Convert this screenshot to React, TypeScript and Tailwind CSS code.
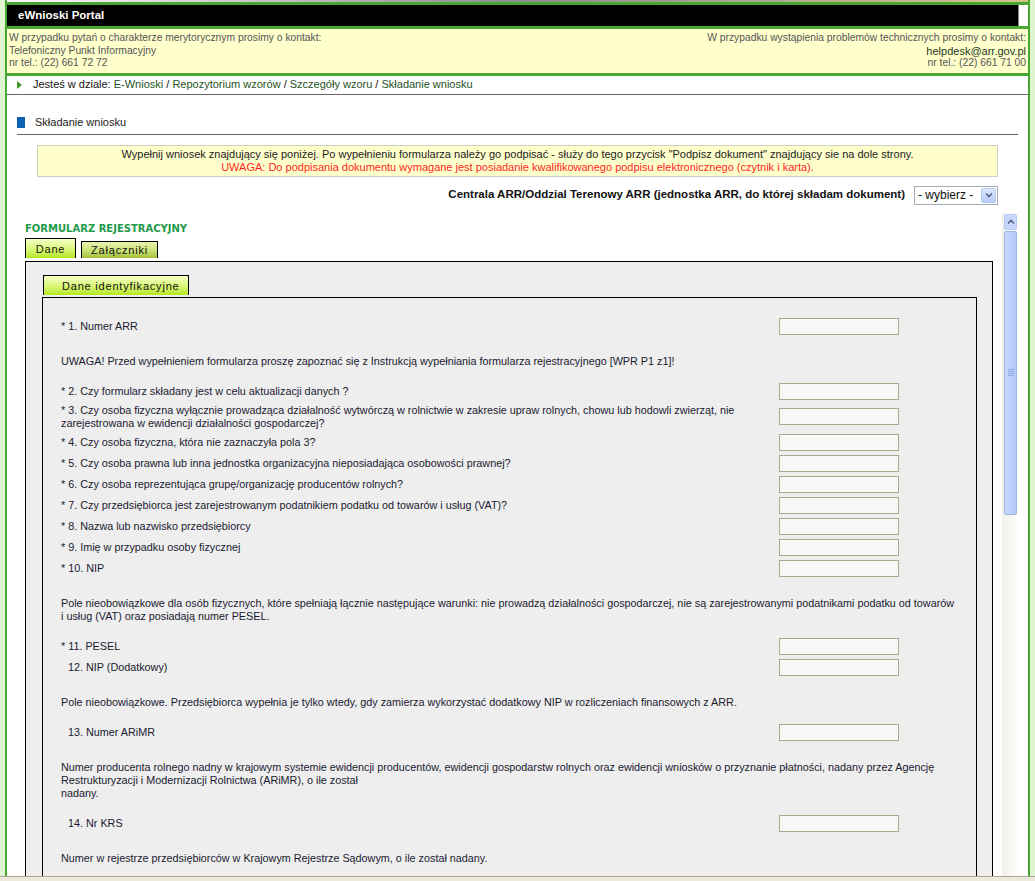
import React from 'react';

const ff = { fontFamily: '"Liberation Sans", Arial, sans-serif' };

interface Row {
  label: React.ReactNode;
  req?: boolean;
}

function Field({ label, req }: Row) {
  return (
    <div className="flex items-center py-[2px]">
      <div className={`w-[718px] leading-[13px] ${req ? '' : 'pl-[7px]'}`}>
        {req ? '* ' : ''}
        {label}
      </div>
      <div className="w-[120px] h-[17px] border border-[#a7ab8d] bg-[#f8f8f8]" />
    </div>
  );
}

function Note({ children }: { children: React.ReactNode }) {
  return <div className="mt-[18px] mb-[13px] leading-[13px]">{children}</div>;
}

function XpScrollbar() {
  return (
    <div className="w-[16px] flex flex-col bg-gradient-to-r from-[#f3f1ec] to-[#fdfdfb] border-l border-[#eeede5]">
      <div className="h-[16px] m-px rounded-[2px] border border-[#b7caf5] bg-[#c6d6fc] flex items-center justify-center">
        <svg width="8" height="6" viewBox="0 0 8 6">
          <path d="M1 4.5 L4 1.5 L7 4.5" fill="none" stroke="#4d6185" strokeWidth="1.6" />
        </svg>
      </div>
      <div className="h-[284px] mx-px rounded-[2px] border border-[#9cb3e6] bg-gradient-to-r from-[#c9d8fc] via-[#bdd0fb] to-[#b4c8f6] flex items-center justify-center">
        <div className="flex flex-col gap-[1px]">
          <div className="w-[6px] h-px bg-[#8ea6e6]" />
          <div className="w-[6px] h-px bg-[#8ea6e6]" />
          <div className="w-[6px] h-px bg-[#8ea6e6]" />
          <div className="w-[6px] h-px bg-[#8ea6e6]" />
        </div>
      </div>
      <div className="flex-1" />
    </div>
  );
}

export default function App() {
  return (
    <div className="w-[1035px] h-[881px] overflow-hidden bg-[#def5cf] flex flex-col" style={ff}>
      <div className="ml-[5px] w-[1025px] flex-1 min-h-0 flex flex-col bg-white border-x-2 border-[#47a634]">
        {/* header */}
        <div className="h-[2px] bg-gradient-to-r from-white via-[#8a8f90] to-[#d8c48a]" />
        <div className="h-[3px] bg-[#4ba532]" />
        <div className="h-[21px] flex">
          <div className="flex-1 bg-black flex items-center pl-[11px] text-white text-[11.5px] font-bold">
            eWnioski Portal
          </div>
          <div className="w-[10px] bg-white border-l border-[#888]" />
        </div>
        <div className="border-y-[3px] border-[#4ba532] bg-[#ffffcc] px-[2px] pt-[3px] pb-[3px] flex justify-between text-[10.3px] leading-[12.5px] text-[#555]">
          <div>
            <div>W przypadku pytań o charakterze merytorycznym prosimy o kontakt:</div>
            <div>Telefoniczny Punkt Informacyjny</div>
            <div>nr tel.: (22) 661 72 72</div>
          </div>
          <div className="text-right">
            <div>W przypadku wystąpienia problemów technicznych prosimy o kontakt:</div>
            <div className="text-[11px] text-[#1e3a1e]">helpdesk@arr.gov.pl</div>
            <div>nr tel.: (22) 661 71 00</div>
          </div>
        </div>

        {/* breadcrumb */}
        <div className="h-[19px] flex items-center pl-[10px] text-[11px] text-[#111] border-b border-[#666]">
          <svg width="5" height="8" viewBox="0 0 5 8" className="mr-[11px]">
            <path d="M0 0 L5 4 L0 8 Z" fill="#3f9a2c" />
          </svg>
          <span>Jesteś w dziale:&nbsp;</span>
          <span className="text-[#245224]">E-Wnioski</span>
          <span>&nbsp;/&nbsp;</span>
          <span className="text-[#245224]">Repozytorium wzorów</span>
          <span>&nbsp;/&nbsp;</span>
          <span className="text-[#245224]">Szczegóły wzoru</span>
          <span>&nbsp;/&nbsp;</span>
          <span className="text-[#245224]">Składanie wniosku</span>
        </div>

        {/* page content */}
        <div className="flex-1 min-h-0 flex flex-col pl-[10px] pr-[10px]">
          <div className="mt-[22px] flex items-center h-[12px] border-b border-[#666] pb-[5px] box-content">
            <div className="w-[8px] h-[11px] bg-[#0b62b4]" />
            <span className="ml-[10px] text-[11px] text-[#222]">Składanie wniosku</span>
          </div>

          <div className="mt-[10px] ml-[20px] mr-[20px] border border-[#cfcfc0] bg-[#ffffcc] py-[2px] text-center text-[11px] leading-[13px]">
            <div className="text-[#222]">
              Wypełnij wniosek znajdujący się poniżej. Po wypełnieniu formularza należy go podpisać - służy do tego przycisk "Podpisz dokument" znajdujący sie na dole strony.
            </div>
            <div className="text-[#ff1f1f]">
              UWAGA: Do podpisania dokumentu wymagane jest posiadanie kwalifikowanego podpisu elektronicznego (czytnik i karta).
            </div>
          </div>

          <div className="mt-[9px] mr-[20px] flex items-center justify-end">
            <span className="text-[11.5px] font-bold text-[#111]">
              Centrala ARR/Oddzial Terenowy ARR (jednostka ARR, do której składam dokument)
            </span>
            <div className="ml-[9px] w-[84px] h-[19px] border border-[#a5acb2] bg-white flex items-center">
              <span className="flex-1 pl-[3px] text-[12px] text-[#111]">- wybierz -</span>
              <div className="w-[15px] h-[15px] mr-px rounded-[2px] border border-[#b7caf5] bg-gradient-to-b from-[#dbe6fe] to-[#b6cbfa] flex items-center justify-center">
                <svg width="8" height="6" viewBox="0 0 8 6">
                  <path d="M1 1.5 L4 4.5 L7 1.5" fill="none" stroke="#4d6185" strokeWidth="1.6" />
                </svg>
              </div>
            </div>
          </div>

          {/* iframe */}
          <div className="mt-[8px] flex-1 min-h-0 flex">
            <div className="flex-1 min-w-0 overflow-hidden pl-[8px] pr-[9px] text-[10.8px] text-[#1a1a30]">
              <div className="mt-[9px] font-bold text-[#1f9a4b] leading-[13px]" style={{ fontFamily: '"DejaVu Sans", Verdana, sans-serif', fontSize: '10px' }}>
                FORMULARZ REJESTRACYJNY
              </div>
              <div className="mt-[3px] flex items-end gap-[5px] tracking-[0.8px] text-[11px]">
                <div className="w-[51px] h-[20px] border border-black border-b-0 bg-gradient-to-b from-[#f4ffc4] via-[#dcf77a] to-[#b4e80a] flex items-center justify-center pt-[2px] text-[#111]">
                  Dane
                </div>
                <div className="w-[77px] h-[17px] border border-black border-b-0 bg-gradient-to-b from-[#e9f3b0] via-[#cfe278] to-[#a2c239] flex items-center justify-center pt-[1px] text-[#111]">
                  Załączniki
                </div>
              </div>
              <div className="mt-[3px] border border-black bg-[#eeeeee] pl-[16px] pr-[15px] pt-[13px]">
                <div className="ml-px w-[146px] h-[20px] border border-black border-b-0 bg-gradient-to-b from-[#f4ffc4] via-[#dcf77a] to-[#b4e80a] flex items-center pl-[18px] pt-[2px] tracking-[0.8px] text-[11px] text-[#111]">
                  Dane identyfikacyjne
                </div>
                <div className="mt-[2px] border border-black bg-[#eeeeee] pl-[18px] pt-[18px] pb-[40px]">
                  <Field req label="1. Numer ARR" />
                  <Note>
                    UWAGA! Przed wypełnieniem formularza proszę zapoznać się z Instrukcją wypełniania formularza rejestracyjnego [WPR P1 z1]!
                  </Note>
                  <Field req label="2. Czy formularz składany jest w celu aktualizacji danych ?" />
                  <Field
                    req
                    label={
                      <>
                        3. Czy osoba fizyczna wyłącznie prowadząca działalność wytwórczą w rolnictwie w zakresie upraw rolnych, chowu lub hodowli zwierząt, nie
                        <br />
                        zarejestrowana w ewidencji działalności gospodarczej?
                      </>
                    }
                  />
                  <Field req label="4. Czy osoba fizyczna, która nie zaznaczyła pola 3?" />
                  <Field req label="5. Czy osoba prawna lub inna jednostka organizacyjna nieposiadająca osobowości prawnej?" />
                  <Field req label="6. Czy osoba reprezentująca grupę/organizację producentów rolnych?" />
                  <Field req label="7. Czy przedsiębiorca jest zarejestrowanym podatnikiem podatku od towarów i usług (VAT)?" />
                  <Field req label="8. Nazwa lub nazwisko przedsiębiorcy" />
                  <Field req label="9. Imię w przypadku osoby fizycznej" />
                  <Field req label="10. NIP" />
                  <Note>
                    Pole nieobowiązkowe dla osób fizycznych, które spełniają łącznie następujące warunki: nie prowadzą działalności gospodarczej, nie są zarejestrowanymi podatnikami podatku od towarów
                    <br />
                    i usług (VAT) oraz posiadają numer PESEL.
                  </Note>
                  <Field req label="11. PESEL" />
                  <Field label="12. NIP (Dodatkowy)" />
                  <Note>
                    Pole nieobowiązkowe. Przedsiębiorca wypełnia je tylko wtedy, gdy zamierza wykorzystać dodatkowy NIP w rozliczeniach finansowych z ARR.
                  </Note>
                  <Field label="13. Numer ARiMR" />
                  <Note>
                    Numer producenta rolnego nadny w krajowym systemie ewidencji producentów, ewidencji gospodarstw rolnych oraz ewidencji wniosków o przyznanie płatności, nadany przez Agencję
                    <br />
                    Restrukturyzacji i Modernizacji Rolnictwa (ARiMR), o ile został
                    <br />
                    nadany.
                  </Note>
                  <Field label="14. Nr KRS" />
                  <Note>Numer w rejestrze przedsiębiorców w Krajowym Rejestrze Sądowym, o ile został nadany.</Note>
                </div>
              </div>
            </div>
            <XpScrollbar />
          </div>
        </div>
      </div>
      <div className="h-[5px] border-t border-[#a9a79a] bg-[#ece9d8]" />
    </div>
  );
}
